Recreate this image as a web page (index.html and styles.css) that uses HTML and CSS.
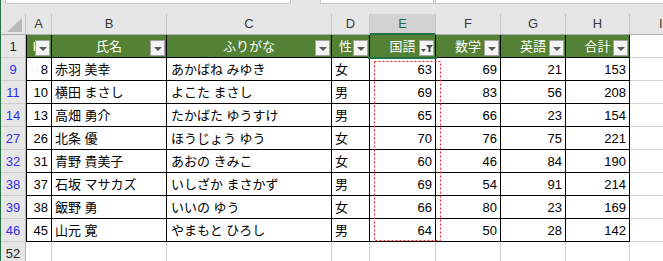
FILE: index.html
```html
<!DOCTYPE html>
<html lang="ja">
<head>
<meta charset="utf-8">
<title>Sheet</title>
<link rel="stylesheet" href="styles.css">
</head>
<body>
<div class="app">
  <div class="topbar">
    <div class="box b1"></div>
    <div class="box b2"></div>
    <div class="box b3"></div>
  </div>
  <div class="sheet">
    <div class="row colhdr">
      <div class="corner"><svg width="24" height="20" viewBox="0 0 24 20"><polygon points="6,18 21,18 21,4" fill="#b9b9b9"/></svg></div>
      <div class="ch">A</div>
      <div class="ch">B</div>
      <div class="ch">C</div>
      <div class="ch">D</div>
      <div class="ch sel">E</div>
      <div class="ch">F</div>
      <div class="ch">G</div>
      <div class="ch">H</div>
      <div class="ch last">I</div>
    </div>

    <div class="row">
      <div class="rh">1</div>
      <div class="c t a hd">ID<span class="btn"></span></div>
      <div class="c t hd">氏名<span class="btn"></span></div>
      <div class="c t hd">ふりがな<span class="btn"></span></div>
      <div class="c t hd hd-d">性<span class="btn"></span></div>
      <div class="c t hd">国語<span class="btn fbtn"><svg width="15" height="16" viewBox="0 0 15 16"><polygon points="2,9 7,9 4.5,12" fill="#4a4a4a"/><polygon points="7,5 14,5 11.5,8 11.5,12 9.5,12 9.5,8" fill="#4a4a4a"/></svg></span></div>
      <div class="c t hd">数学<span class="btn"></span></div>
      <div class="c t hd">英語<span class="btn"></span></div>
      <div class="c t hd">合計<span class="btn"></span></div>
      <div class="c"></div>
    </div>

    <div class="row">
      <div class="rh f">9</div>
      <div class="c t a num">8</div>
      <div class="c t">赤羽 美幸</div>
      <div class="c t kana">あかばね みゆき</div>
      <div class="c t">女</div>
      <div class="c t num">63</div>
      <div class="c t num">69</div>
      <div class="c t num">21</div>
      <div class="c t num">153</div>
      <div class="c"></div>
    </div>

    <div class="row">
      <div class="rh f">11</div>
      <div class="c t a num">10</div>
      <div class="c t">横田 まさし</div>
      <div class="c t kana">よこた まさし</div>
      <div class="c t">男</div>
      <div class="c t num">69</div>
      <div class="c t num">83</div>
      <div class="c t num">56</div>
      <div class="c t num">208</div>
      <div class="c"></div>
    </div>

    <div class="row">
      <div class="rh f">14</div>
      <div class="c t a num">13</div>
      <div class="c t">高畑 勇介</div>
      <div class="c t kana">たかばた ゆうすけ</div>
      <div class="c t">男</div>
      <div class="c t num">65</div>
      <div class="c t num">66</div>
      <div class="c t num">23</div>
      <div class="c t num">154</div>
      <div class="c"></div>
    </div>

    <div class="row">
      <div class="rh f">27</div>
      <div class="c t a num">26</div>
      <div class="c t">北条 優</div>
      <div class="c t kana">ほうじょう ゆう</div>
      <div class="c t">女</div>
      <div class="c t num">70</div>
      <div class="c t num">76</div>
      <div class="c t num">75</div>
      <div class="c t num">221</div>
      <div class="c"></div>
    </div>

    <div class="row">
      <div class="rh f">32</div>
      <div class="c t a num">31</div>
      <div class="c t">青野 貴美子</div>
      <div class="c t kana">あおの きみこ</div>
      <div class="c t">女</div>
      <div class="c t num">60</div>
      <div class="c t num">46</div>
      <div class="c t num">84</div>
      <div class="c t num">190</div>
      <div class="c"></div>
    </div>

    <div class="row">
      <div class="rh f">38</div>
      <div class="c t a num">37</div>
      <div class="c t">石坂 マサカズ</div>
      <div class="c t kana">いしざか まさかず</div>
      <div class="c t">男</div>
      <div class="c t num">69</div>
      <div class="c t num">54</div>
      <div class="c t num">91</div>
      <div class="c t num">214</div>
      <div class="c"></div>
    </div>

    <div class="row">
      <div class="rh f">39</div>
      <div class="c t a num">38</div>
      <div class="c t">飯野 勇</div>
      <div class="c t kana">いいの ゆう</div>
      <div class="c t">女</div>
      <div class="c t num">66</div>
      <div class="c t num">80</div>
      <div class="c t num">23</div>
      <div class="c t num">169</div>
      <div class="c"></div>
    </div>

    <div class="row">
      <div class="rh f">46</div>
      <div class="c t a num">45</div>
      <div class="c t">山元 寛</div>
      <div class="c t kana">やまもと ひろし</div>
      <div class="c t">男</div>
      <div class="c t num">64</div>
      <div class="c t num">50</div>
      <div class="c t num">28</div>
      <div class="c t num">142</div>
      <div class="c"></div>
    </div>

    <div class="row">
      <div class="rh">52</div>
      <div class="c"></div>
      <div class="c"></div>
      <div class="c"></div>
      <div class="c"></div>
      <div class="c"></div>
      <div class="c"></div>
      <div class="c"></div>
      <div class="c"></div>
      <div class="c"></div>
    </div>
  </div>

  <svg class="marquee" width="67" height="180" viewBox="0 0 67 180"><rect x="0.5" y="0.5" width="66" height="179" fill="none" stroke="#ff1e1e" stroke-width="1" stroke-dasharray="2 2"/></svg>
  <div class="selbar"></div>
</div>
</body>
</html>
```

FILE: styles.css
```css
html, body {
  margin: 0;
  padding: 0;
  background: #ffffff;
  overflow: hidden;
}

body {
  font-family: "Liberation Sans", "Noto Sans CJK JP", sans-serif;
  font-size: 13px;
  color: #000;
}

.app {
  position: relative;
  width: 662px;
  height: 261px;
  overflow: hidden;
  border-left: 1px solid #217346;
}

.topbar {
  height: 14px;
  background: #e6e6e6;
  display: flex;
  align-items: flex-start;
  padding-left: 4px;
}

.box {
  height: 4px;
  box-sizing: border-box;
  background: #ffffff;
  border: 1px solid #c6c6c6;
  border-top: none;
}

.b1 { width: 286px; margin-right: 29px; }
.b2 { width: 114px; margin-right: 1px; }
.b3 { flex: 1; border-right: none; }

.row {
  display: grid;
  grid-template-columns: 25px 26px 115px 165px 38px 66px 65px 65px 64px minmax(0, 1fr);
  height: 23px;
}

.colhdr {
  height: 21px;
}

.corner {
  background: #e6e6e6;
  box-sizing: border-box;
  border-right: 1px solid #c6c6c6;
  border-bottom: 1px solid #ababab;
  height: 21px;
}

.corner svg {
  display: block;
}

.ch {
  background: #e6e6e6;
  box-sizing: border-box;
  height: 21px;
  border-right: 1px solid #c6c6c6;
  border-bottom: 1px solid #ababab;
  text-align: center;
  line-height: 20px;
  font-size: 13px;
  color: #3a3a3a;
  overflow: hidden;
}

.ch.last {
  text-align: left;
  padding-left: 29px;
  border-right: none;
}

.ch.sel {
  background: #d2d2d2;
  color: #1f6b40;
  border-bottom: 2px solid #217346;
  line-height: 19px;
}

.rh {
  background: #e6e6e6;
  box-sizing: border-box;
  height: 23px;
  border-right: 1px solid #b4b4b4;
  border-bottom: 1px solid #cfcfcf;
  text-align: center;
  line-height: 21px;
  padding-top: 1px;
  color: #222;
}

.rh.f {
  color: #2e2ef2;
}

.c {
  position: relative;
  box-sizing: border-box;
  height: 23px;
  border-right: 1px solid #d4d4d4;
  border-bottom: 1px solid #d4d4d4;
  padding: 1px 3px 0 3px;
  line-height: 21px;
  white-space: nowrap;
  overflow: hidden;
}

.row > .c:last-child {
  border-right: none;
}

.c.t {
  border-right-color: #000;
  border-bottom-color: #000;
}

.c.a {
  border-left: 1px solid #000;
}

.c.num {
  text-align: right;
}

.c.kana {
  padding-left: 4px;
}

.c.hd {
  background: #548235;
  color: #ffffff;
  text-align: center;
  padding-top: 2px;
  line-height: 20px;
}

.c.hd-d {
  padding-right: 13px;
}

.btn {
  position: absolute;
  right: 1px;
  top: 5px;
  width: 15px;
  height: 16px;
  box-sizing: border-box;
  background: #f4f4f4;
  border: 1px solid #a3a3a3;
}

.btn::after {
  content: "";
  position: absolute;
  left: 3px;
  top: 6px;
  width: 0;
  height: 0;
  border-left: 4px solid transparent;
  border-right: 4px solid transparent;
  border-top: 4px solid #595959;
}

.btn.fbtn::after {
  display: none;
}

.btn.fbtn svg {
  position: absolute;
  left: -1px;
  top: -1px;
}

.marquee {
  position: absolute;
  left: 373px;
  top: 61px;
}

.selbar {
  position: absolute;
  left: 367px;
  top: 57px;
  width: 69px;
  height: 2px;
  background: #217346;
}
```
